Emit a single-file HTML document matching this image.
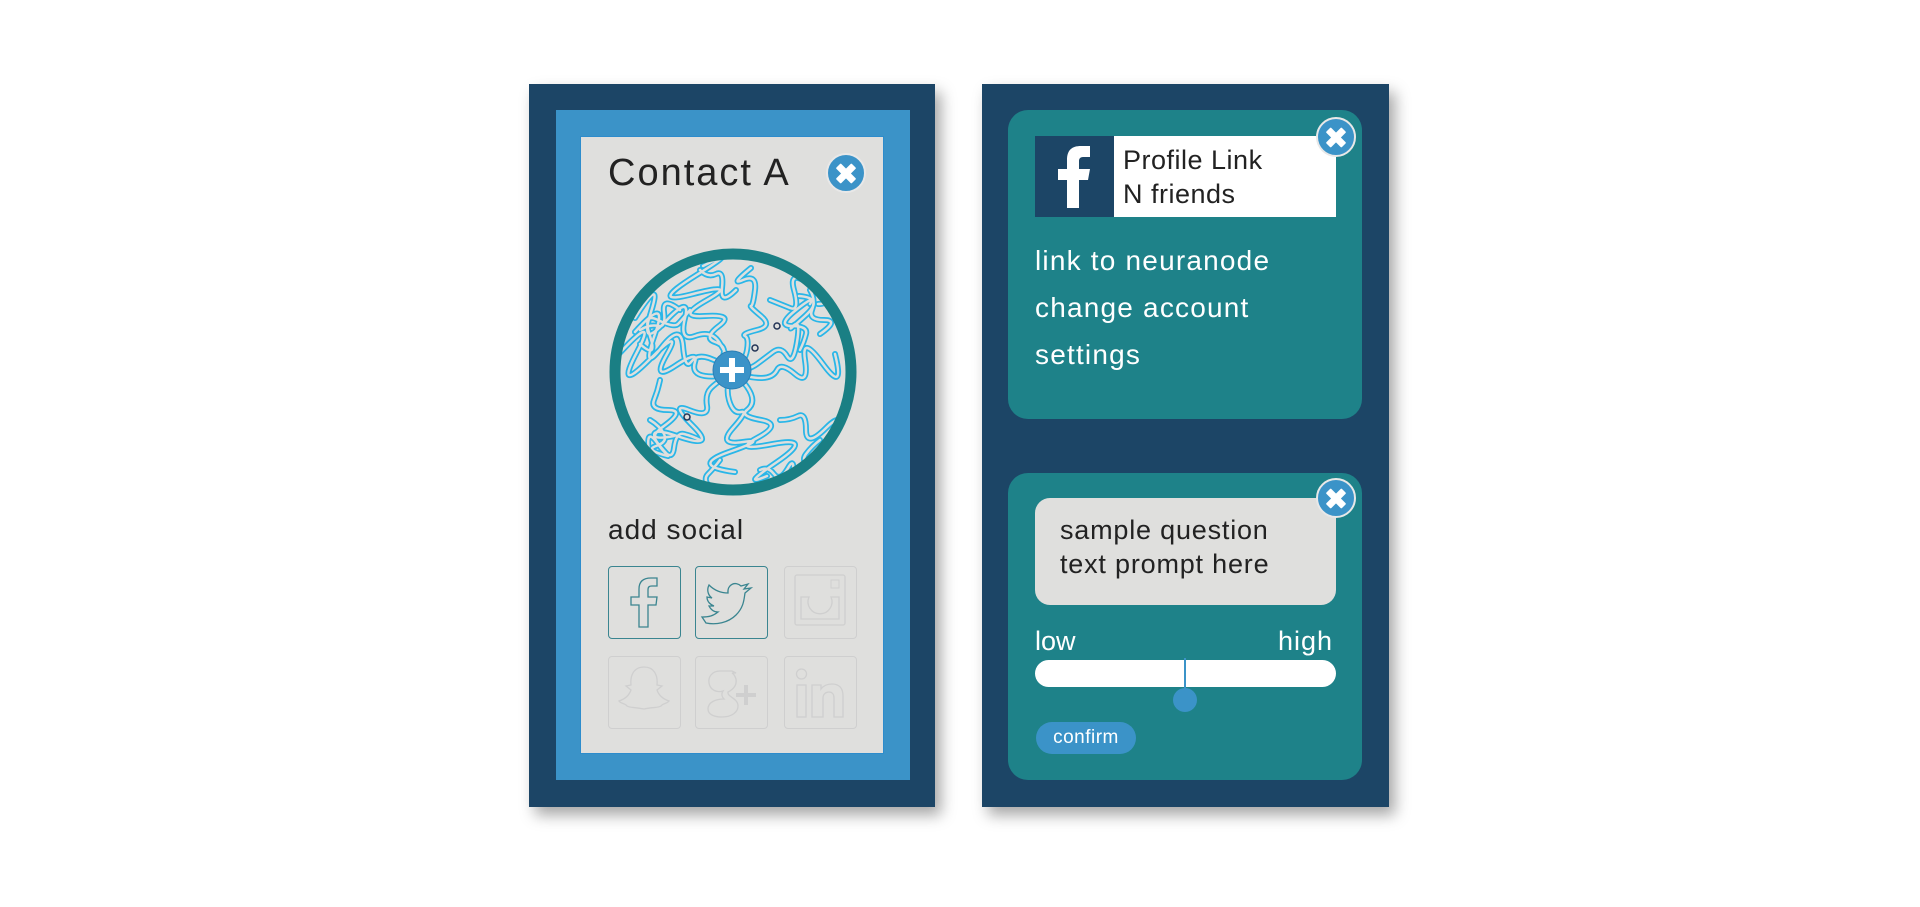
<!DOCTYPE html>
<html><head><meta charset="utf-8"><style>
*{margin:0;padding:0;box-sizing:border-box}
body{width:1920px;height:907px;background:#fff;position:relative;overflow:hidden;font-family:"Liberation Sans","DejaVu Sans",sans-serif}
.abs{position:absolute}
.outer{background:#1c4566;box-shadow:6px 8px 14px rgba(0,0,0,.35)}
.x{position:absolute;width:40px;height:40px;border-radius:50%;background:#3b93c8;border:2px solid #e8e8e8}
.x:before,.x:after{content:"";position:absolute;left:7px;top:15px;width:22px;height:7px;background:#fff;border-radius:1px}
.x:before{transform:rotate(45deg)}.x:after{transform:rotate(-45deg)}
.card{background:#1e8289;border-radius:20px}
.t{position:absolute;white-space:nowrap}
.ic{position:absolute;width:73px;height:73px;border:1.5px solid #3a8590;border-radius:4px}
.ic.f{border-color:#cfcfcf}
</style></head><body>
<!-- left -->
<div class="abs outer" style="left:529px;top:84px;width:406px;height:723px"></div>
<div class="abs" style="left:556px;top:110px;width:354px;height:670px;background:#3b93c8"></div>
<div class="abs" style="left:580px;top:136px;width:304px;height:618px;background:#dfdfdd;border:1px solid #2d8ccc"></div>
<div class="t" style="left:608px;top:152px;font-size:38px;color:#222;letter-spacing:2px">Contact A</div>
<div class="x" style="left:826px;top:153px"></div>
<svg class="abs" style="left:600px;top:240px" width="270" height="265" viewBox="600 240 270 265">
<defs><clipPath id="c"><circle cx="733" cy="372" r="113"/></clipPath></defs>
<g clip-path="url(#c)" fill="none" stroke-linejoin="round" stroke-linecap="round">
<g stroke="#29b6e8" stroke-width="6">
<path id="p" d="M733 372 q-14 -6 -10 -16 t-8 -14 t4 -16 t-14 -10 t2 -16 t-14 -6 t2 -18 t8 -10 M733 372 q12 -10 14 -22 t-2 -14 t12 -6 t4 -14 t-10 -10 t4 -16 t-12 -10 t8 -12 M733 372 q16 -2 24 -8 t16 -12 t14 4 t10 -14 t-4 -16 t12 -10 t-6 -20 M733 372 q16 6 28 6 t16 -8 t18 4 t10 -14 t18 4 t12 -10 M733 372 q14 12 18 22 t-4 16 t14 10 t-4 18 t16 6 t4 18 t-10 14 M733 372 q-8 14 -4 28 t12 12 t-8 16 t10 14 t-14 10 t6 20 M733 372 q-16 10 -22 16 t-4 18 t-18 4 t4 16 t-16 10 t-10 18 M733 372 q-14 6 -28 4 t-10 -14 t-20 4 t-8 -12 t-18 6 t-12 -8 t-20 4 M733 372 q-12 -10 -24 -14 t-18 4 t-8 -16 t-22 2 t-6 -14 t-20 -2 M733 372 q-6 -18 -14 -30 t-24 -6 t-10 -18 t-20 4 t-14 -10 t-16 6 M690 310 q-8 10 -12 14 t-20 -4 t-8 16 t-10 8 M780 420 q10 0 18 -4 t8 14 t20 -2 t10 10 M700 440 q-8 -4 -16 -6 t-10 14 t-16 -4 t-8 14 M770 300 q10 4 20 8 t4 -18 t18 -4 t6 18 M660 380 q-2 10 -6 20 t14 10 t-4 16 t10 10 M800 350 q4 -8 6 -16 t-14 -8 t4 -16 t14 -6 M720 460 q-6 8 -12 14 t4 16 t-10 8 M650 420 q10 6 14 14 t-8 12 t12 10 M820 440 q-8 6 -14 14 t6 14 t-12 8 M640 330 q10 -6 18 -4 t6 -14 t16 -2 M760 470 q8 -4 14 4 t14 -6 t4 14 M700 270 q8 8 16 4 t6 14 t14 2 M810 290 q6 10 2 20 t12 10 t-4 14"/>
</g>
<g stroke="#dfdfdd" stroke-width="2.5"><use href="#p"/></g>
</g>
<circle cx="733" cy="372" r="118" fill="none" stroke="#1a7f84" stroke-width="11"/>
<circle cx="777" cy="326" r="3" fill="#dfdfdd" stroke="#235" stroke-width="1.5"/>
<circle cx="755" cy="348" r="3" fill="#dfdfdd" stroke="#235" stroke-width="1.5"/>
<circle cx="687" cy="417" r="3" fill="#dfdfdd" stroke="#235" stroke-width="1.5"/>
<circle cx="732" cy="370" r="19" fill="#3b93c8" stroke="#2a7fb5" stroke-width="1"/>
<path d="M732 358v24M720 370h24" stroke="#fff" stroke-width="6"/>
</svg>
<div class="t" style="left:608px;top:514px;font-size:28px;color:#222;letter-spacing:1px">add social</div>
<div class="ic" style="left:608px;top:566px"><svg width="70" height="70" viewBox="0 0 70 70"><path d="M30 60V38h-8v-8h8v-8c0-8 5-11 12-11h6v8h-5c-3 0-4 1-4 4v7h9l-1 8h-8v22z" fill="none" stroke="#3a8590" stroke-width="1.3"/></svg></div>
<div class="ic" style="left:695px;top:566px"><svg width="70" height="70" viewBox="0 0 70 70"><path d="M10 56c10 2 22 0 30-8 8-8 8-16 9-22l6-5-7 1 4-5-7 2c-5-5-14-2-13 7-9 0-15-4-19-8-3 6 0 11 3 13l-5-1c0 5 4 8 7 9h-5c2 4 5 6 9 6-5 4-9 5-16 5z" fill="none" stroke="#3a8590" stroke-width="1.3"/></svg></div>
<div class="ic f" style="left:784px;top:566px"><svg width="70" height="70" viewBox="0 0 70 70"><rect x="10" y="8" width="50" height="50" rx="2" fill="none" stroke="#cfcfcf" stroke-width="1.3"/><path d="M16 30v22h38V30h-8a12 12 0 1 1-22 0z" fill="none" stroke="#cfcfcf" stroke-width="1.3"/><rect x="46" y="13" width="8" height="8" fill="none" stroke="#cfcfcf"/></svg></div>
<div class="ic f" style="left:608px;top:656px"><svg width="70" height="70" viewBox="0 0 70 70"><path d="M35 10c-10 0-14 8-13 18l-5 1 5 4c-2 6-6 9-12 11 2 3 6 2 8 5 3 2 8 1 17 3 9-2 14-1 17-3 2-3 6-2 8-5-6-2-10-5-12-11l5-4-5-1c1-10-3-18-13-18z" fill="none" stroke="#cfcfcf" stroke-width="1.3"/></svg></div>
<div class="ic f" style="left:695px;top:656px"><svg width="70" height="70" viewBox="0 0 70 70"><path d="M36 14H24c-8 0-12 6-11 12 1 7 8 10 14 8-2 3-1 6 1 8-8 0-16 3-16 10 0 6 7 8 14 8 10 0 16-5 16-11 0-8-11-9-10-14 6-3 9-7 8-13-1-3-2-5-4-6h4z" fill="none" stroke="#cfcfcf" stroke-width="1.3"/><path d="M50 28v20M40 38h20" stroke="#cfcfcf" stroke-width="4"/></svg></div>
<div class="ic f" style="left:784px;top:656px"><svg width="70" height="70" viewBox="0 0 70 70"><rect x="12" y="28" width="9" height="32" fill="none" stroke="#cfcfcf" stroke-width="1.3"/><circle cx="16.5" cy="17" r="5" fill="none" stroke="#cfcfcf" stroke-width="1.3"/><path d="M27 28h9v4c3-4 7-5 11-5 7 0 11 4 11 12v21h-9V41c0-4-2-6-5-6s-6 2-6 6v19h-11z" fill="none" stroke="#cfcfcf" stroke-width="1.3"/></svg></div>

<!-- right -->
<div class="abs outer" style="left:982px;top:84px;width:407px;height:723px"></div>
<div class="abs card" style="left:1008px;top:110px;width:354px;height:309px"></div>
<div class="abs" style="left:1035px;top:136px;width:79px;height:81px;background:#1c4566"></div>
<svg class="abs" style="left:1035px;top:136px" width="79" height="81" viewBox="0 0 79 81"><path d="M32 72V44h-9V33h9v-9c0-10 5-14 14-14h9v11h-7c-3 0-4 2-4 4v8h11l-2 11h-9v28z" fill="#fff"/></svg>
<div class="abs" style="left:1114px;top:136px;width:222px;height:81px;background:#fff"></div>
<div class="t" style="left:1123px;top:143px;font-size:27px;line-height:34px;color:#222;letter-spacing:.5px">Profile Link<br>N friends</div>
<div class="x" style="left:1316px;top:117px"></div>
<div class="t" style="left:1035px;top:237px;font-size:28px;line-height:47px;color:#fff;letter-spacing:1.2px">link to neuranode<br>change account<br>settings</div>

<div class="abs card" style="left:1008px;top:473px;width:354px;height:307px"></div>
<div class="abs" style="left:1035px;top:498px;width:301px;height:107px;background:#dfdfdd;border-radius:15px"></div>
<div class="t" style="left:1060px;top:513px;font-size:27px;line-height:34px;color:#222;letter-spacing:.8px">sample question<br>text prompt here</div>
<div class="x" style="left:1316px;top:478px"></div>
<div class="t" style="left:1035px;top:626px;font-size:27px;color:#fff">low</div>
<div class="t" style="left:1278px;top:626px;font-size:27px;color:#fff;letter-spacing:1px">high</div>
<div class="abs" style="left:1035px;top:660px;width:301px;height:27px;background:#fff;border-radius:14px"></div>
<div class="abs" style="left:1184px;top:658px;width:2px;height:42px;background:#3b93c8"></div>
<div class="abs" style="left:1173px;top:688px;width:24px;height:24px;border-radius:50%;background:#3b93c8"></div>
<div class="abs" style="left:1036px;top:722px;width:100px;height:32px;border-radius:16px;background:#3b93c8;color:#fff;font-size:19px;line-height:32px;text-align:center;letter-spacing:.5px">confirm</div>
</body></html>
